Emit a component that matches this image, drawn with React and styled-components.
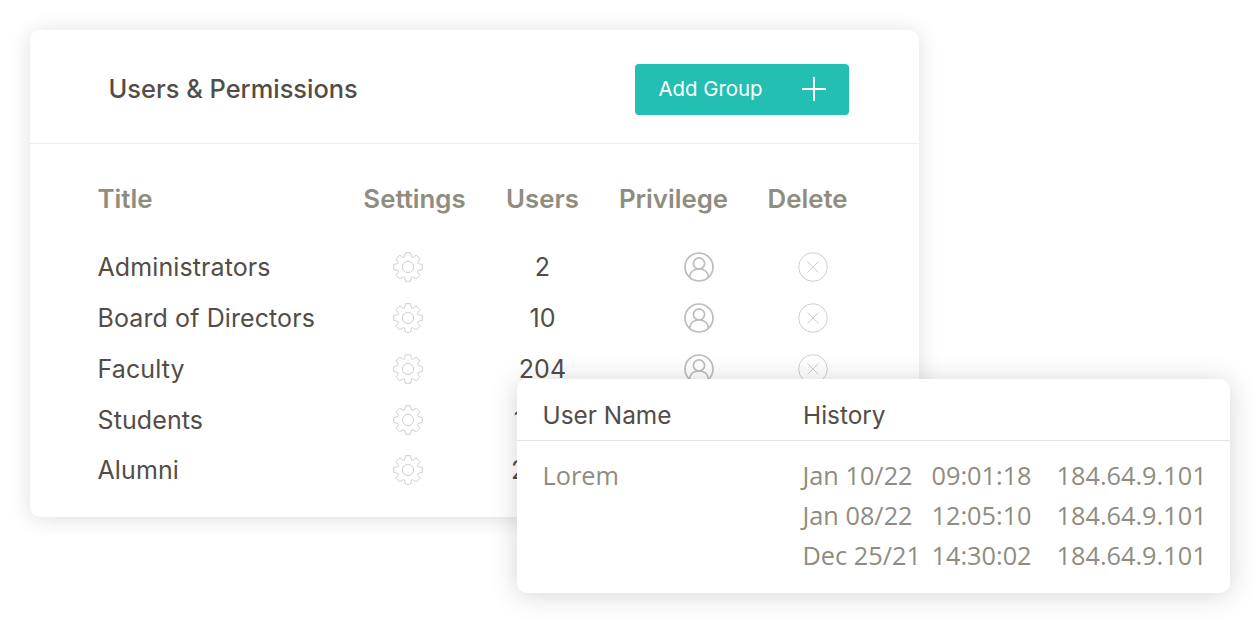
import React from "react";
import styled, { createGlobalStyle } from "styled-components";

const Global = createGlobalStyle`
  html, body { margin: 0; padding: 0; background: #fff; }
  body { width: 1260px; height: 623px; overflow: hidden; font-family: Inter, "Liberation Sans", sans-serif; }
`;
const Stage = styled.div`
  position: relative;
  width: 1260px;
  height: 623px;
  padding: 30px 0 0 30px;
  box-sizing: border-box;
`;
const Card = styled.section`
  width: 889px;
  height: 487px;
  box-sizing: border-box;
  background: #fff;
  border-radius: 10px;
  box-shadow: 0 2px 22px rgba(0, 0, 0, 0.13);
  overflow: hidden;
`;
const Header = styled.header`
  height: 114px;
  box-sizing: border-box;
  display: flex;
  align-items: center;
  justify-content: space-between;
  padding: 4px 70px 0 78.5px;
  border-bottom: 1px solid #ececea;
`;
const Heading = styled.h1`
  margin: 0;
  font-size: 25.4px;
  font-weight: 500;
  color: #524d47;
`;
const AddButton = styled.button`
  width: 214px;
  height: 51px;
  margin-top: 2px;
  display: flex;
  align-items: center;
  justify-content: space-between;
  padding: 0 22px 2px 23.5px;
  border: 0;
  border-radius: 4px;
  background: #23bfb2;
  color: #fff;
  font: 400 20.4px Inter, sans-serif;
`;
const Table = styled.div`
  display: grid;
  grid-template-columns: 262px 110px 146px 116px 152px;
  grid-template-rows: 68px;
  grid-auto-rows: 50.75px;
  padding: 30px 0 0 67.5px;
  align-items: center;
`;
const HeadCell = styled.div`
  align-self: start;
  height: 49px;
  display: flex;
  align-items: center;
  justify-content: ${(p) => (p.$left ? "flex-start" : "center")};
  font-size: 25.8px;
  font-weight: 600;
  white-space: nowrap;
  color: #8f8c80;
`;
const Cell = styled.div`
  display: flex;
  align-items: center;
  justify-content: ${(p) => (p.$left ? "flex-start" : "center")};
  font-size: 25px;
  letter-spacing: 0.1px;
  color: #524d47;
`;
const IconCell = styled.div`
  display: flex;
  align-items: center;
  justify-content: center;
  padding-left: ${(p) => p.$before || 0}px;
  padding-right: ${(p) => p.$after || 0}px;
`;
const Popup = styled.section`
  position: absolute;
  left: 517px;
  top: 379px;
  width: 713px;
  height: 214px;
  background: #fff;
  border-radius: 10px;
  box-shadow: 0 2px 28px rgba(0, 0, 0, 0.17);
`;
const PopupHead = styled.div`
  height: 62px;
  box-sizing: border-box;
  display: grid;
  grid-template-columns: 260.5px 1fr;
  align-items: center;
  padding: 10px 0 0 25.5px;
  border-bottom: 1px solid #e4e4e2;
  font-size: 24.4px;
  color: #524d47;
`;
const PopupBody = styled.div`
  display: grid;
  grid-template-columns: 260px 129px 125px 1fr;
  grid-auto-rows: 40px;
  padding: 14px 0 0 25.5px;
  align-items: center;
  font-family: "Open Sans", sans-serif;
  font-size: 25.3px;
  color: #8f8c80;
  white-space: nowrap;
`;

const gearPath = (() => {
  const teeth = 8;
  const outer = 14.5;
  const root = 10.6;
  const pts = [];
  for (let i = 0; i < teeth; i++) {
    const a = (i * 2 * Math.PI) / teeth - Math.PI / 2;
    const p = (r, d) => [15 + r * Math.cos(a + d), 15 + r * Math.sin(a + d)];
    pts.push(p(root, -0.34), p(outer, -0.17), p(outer, 0.17), p(root, 0.34));
  }
  return "M" + pts.map(([x, y]) => `${x.toFixed(2)} ${y.toFixed(2)}`).join("L") + "Z";
})();

const Gear = () => (
  <svg width="30" height="30" viewBox="0 0 30 30" fill="none" stroke="#cfcfcf" strokeWidth="1" strokeLinejoin="round">
    <circle cx="15" cy="15" r="5.6" />
    <path d={gearPath} />
  </svg>
);
const Person = () => (
  <svg width="30" height="30" viewBox="0 0 30 30" fill="none" stroke="#bdbdbb" strokeWidth="1.7">
    <circle cx="15" cy="15" r="14" />
    <circle cx="15" cy="11.5" r="5.6" />
    <path d="M5.600 25c.6-5.200 4-8 9.400-8s8.800 2.800 9.400 8" />
  </svg>
);
const Cross = () => (
  <svg width="30" height="30" viewBox="0 0 30 30" fill="none" stroke="#cfcfcf" strokeWidth="1">
    <circle cx="15" cy="15" r="14.300" />
    <path d="M9.500 9.500l11 11M20.500 9.500l-11 11" />
  </svg>
);
const Plus = () => (
  <svg width="26" height="26" viewBox="0 0 26 26" stroke="#fff" strokeWidth="2">
    <path d="M13 1v24M1 13h24" />
  </svg>
);

const rows = [
  ["Administrators", "2"],
  ["Board of Directors", "10"],
  ["Faculty", "204"],
  ["Students", "1024"],
  ["Alumni", "2048"],
];
const history = [
  ["Lorem", "Jan 10/22", "09:01:18", "184.64.9.101"],
  ["", "Jan 08/22", "12:05:10", "184.64.9.101"],
  ["", "Dec 25/21", "14:30:02", "184.64.9.101"],
];

export default function App() {
  return (
    <Stage>
      <Global />
      <Card>
        <Header>
          <Heading>Users &amp; Permissions</Heading>
          <AddButton>Add Group<Plus /></AddButton>
        </Header>
        <Table>
          <HeadCell $left>Title</HeadCell>
          <HeadCell>Settings</HeadCell>
          <HeadCell>Users</HeadCell>
          <HeadCell>Privilege</HeadCell>
          <HeadCell>Delete</HeadCell>
          {rows.map(([title, n]) => (
            <React.Fragment key={title}>
              <Cell $left>{title}</Cell>
              <IconCell $after={14}><Gear /></IconCell>
              <Cell>{n}</Cell>
              <IconCell $before={50}><Person /></IconCell>
              <IconCell $before={10}><Cross /></IconCell>
            </React.Fragment>
          ))}
        </Table>
      </Card>
      <Popup>
        <PopupHead><span>User Name</span><span>History</span></PopupHead>
        <PopupBody>
          {history.map((r) => r.map((v, i) => <span key={r[1] + i}>{v}</span>))}
        </PopupBody>
      </Popup>
    </Stage>
  );
}
